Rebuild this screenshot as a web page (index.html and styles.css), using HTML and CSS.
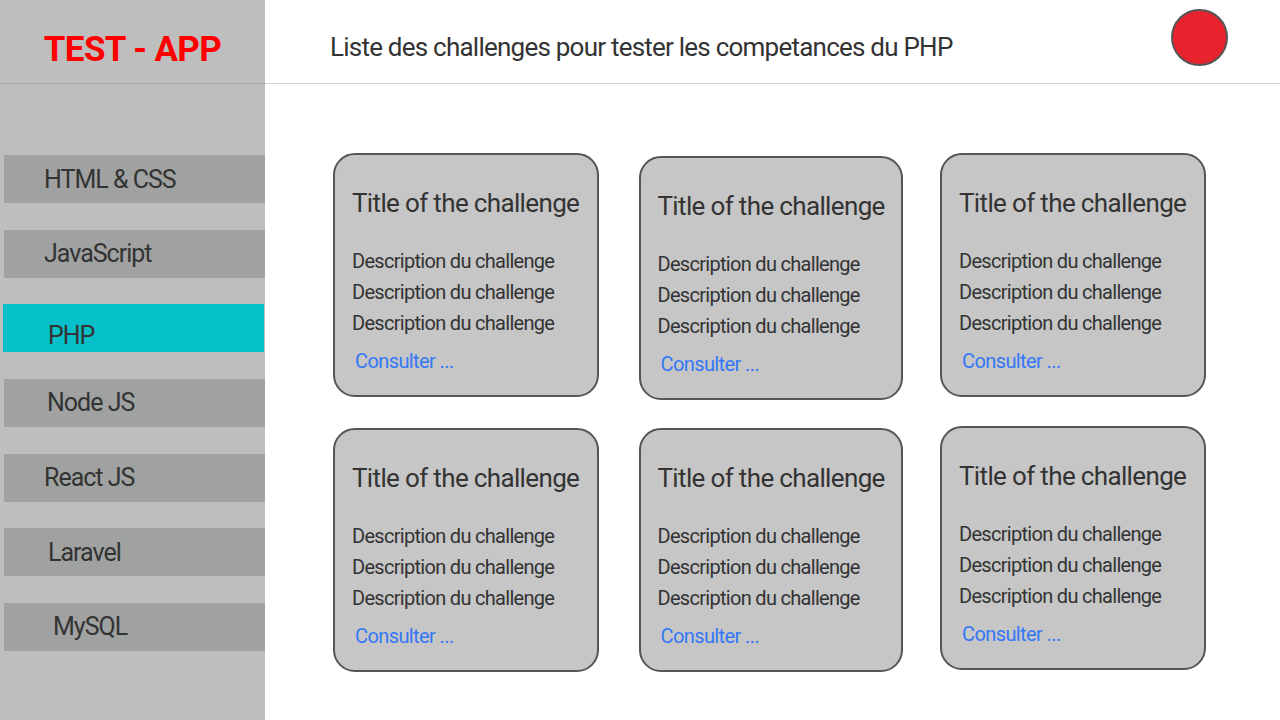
FILE: index.html
```html
<!DOCTYPE html>
<html lang="fr">
<head>
<meta charset="utf-8">
<title>TEST - APP</title>
<link rel="stylesheet" href="styles.css">
</head>
<body>
<div class="app">
  <aside class="sidebar">
    <div class="brand">TEST - APP</div>
    <nav class="nav">
      <a class="nav-item">HTML &amp; CSS</a>
      <a class="nav-item">JavaScript</a>
      <a class="nav-item active">PHP</a>
      <a class="nav-item nav-item--in3">Node JS</a>
      <a class="nav-item">React JS</a>
      <a class="nav-item nav-item--in4">Laravel</a>
      <a class="nav-item nav-item--in9">MySQL</a>
    </nav>
  </aside>
  <main class="main">
    <header class="topbar">
      <h1 class="page-title">Liste des challenges pour tester les competances du PHP</h1>
      <div class="avatar"></div>
    </header>
    <section class="cards">
      <article class="card">
        <h2 class="card-title">Title of the challenge</h2>
        <p class="card-desc">Description du challenge<br>Description du challenge<br>Description du challenge</p>
        <a class="card-link">Consulter ...</a>
      </article>
      <article class="card card--low">
        <h2 class="card-title">Title of the challenge</h2>
        <p class="card-desc">Description du challenge<br>Description du challenge<br>Description du challenge</p>
        <a class="card-link">Consulter ...</a>
      </article>
      <article class="card">
        <h2 class="card-title">Title of the challenge</h2>
        <p class="card-desc">Description du challenge<br>Description du challenge<br>Description du challenge</p>
        <a class="card-link">Consulter ...</a>
      </article>
      <article class="card">
        <h2 class="card-title">Title of the challenge</h2>
        <p class="card-desc">Description du challenge<br>Description du challenge<br>Description du challenge</p>
        <a class="card-link">Consulter ...</a>
      </article>
      <article class="card">
        <h2 class="card-title">Title of the challenge</h2>
        <p class="card-desc">Description du challenge<br>Description du challenge<br>Description du challenge</p>
        <a class="card-link">Consulter ...</a>
      </article>
      <article class="card card--high">
        <h2 class="card-title">Title of the challenge</h2>
        <p class="card-desc">Description du challenge<br>Description du challenge<br>Description du challenge</p>
        <a class="card-link">Consulter ...</a>
      </article>
    </section>
  </main>
</div>
</body>
</html>
```
FILE: styles.css
```css
* { box-sizing: border-box; }
html, body { margin: 0; padding: 0; }
body {
  font-family: Roboto, "Liberation Sans", sans-serif;
  color: #333;
  background: #fff;
  width: 1280px;
  height: 720px;
  overflow: hidden;
}
.app {
  display: grid;
  grid-template-columns: 265px 1fr;
  height: 720px;
}
.sidebar {
  background: #bebebe;
  display: flex;
  flex-direction: column;
}
.brand {
  height: 84px;
  border-bottom: 1px solid #a9a9a9;
  display: flex;
  align-items: center;
  justify-content: center;
  padding-top: 16px;
  color: #ff0000;
  font-weight: 700;
  font-size: 35px;
  letter-spacing: -0.6px;
}
.nav {
  display: flex;
  flex-direction: column;
  gap: 26.67px;
  padding: 71px 0 0 4px;
}
.nav-item {
  height: 48px;
  background: #a0a2a1;
  display: flex;
  align-items: center;
  padding-left: 40px;
  font-size: 25px;
  color: #333;
  letter-spacing: -1px;
}
.nav-item--in3 { padding-left: 43px; }
.nav-item--in4 { padding-left: 44px; }
.nav-item--in9 { padding-left: 49px; }
.nav-item.active {
  background: #05c0c8;
  margin-left: -1px;
  margin-right: 1px;
  padding-top: 14px;
  padding-left: 45px;
}
.main {
  display: flex;
  flex-direction: column;
}
.topbar {
  height: 84px;
  border-bottom: 1px solid #d4d4d4;
  display: flex;
  align-items: center;
  justify-content: space-between;
  padding: 10px 52px 0 65px;
}
.page-title {
  margin: 0;
  font-weight: 400;
  font-size: 26px;
  letter-spacing: -0.77px;
  color: #333;
}
.avatar {
  width: 57px;
  height: 57px;
  border-radius: 50%;
  background: #e8232e;
  border: 2px solid #555;
  margin-bottom: 19px;
}
.cards {
  display: grid;
  grid-template-columns: 266px 266px 266px;
  grid-template-rows: 247px 244px;
  column-gap: 37.5px;
  row-gap: 28px;
  padding: 69px 0 0 68px;
}
.card {
  height: 244px;
  background: #c6c6c6;
  border: 2px solid #555;
  border-radius: 22px;
  padding: 31px 0 0 17px;
  align-self: start;
}
.card:nth-child(3n+2) { margin-left: 2px; }
.card--low { align-self: end; }
.card--high { margin-top: -2px; }
.card-title {
  margin: 0;
  font-weight: 400;
  font-size: 26px;
  line-height: 34px;
  letter-spacing: -0.65px;
  color: #333;
}
.card-desc {
  margin: 26px 0 0;
  font-size: 20px;
  line-height: 31px;
  letter-spacing: -0.7px;
  color: #333;
}
.card-link {
  display: block;
  margin-top: 10px;
  padding-left: 3px;
  font-size: 20px;
  line-height: 24px;
  color: #3478f6;
  letter-spacing: -0.6px;
}
```
